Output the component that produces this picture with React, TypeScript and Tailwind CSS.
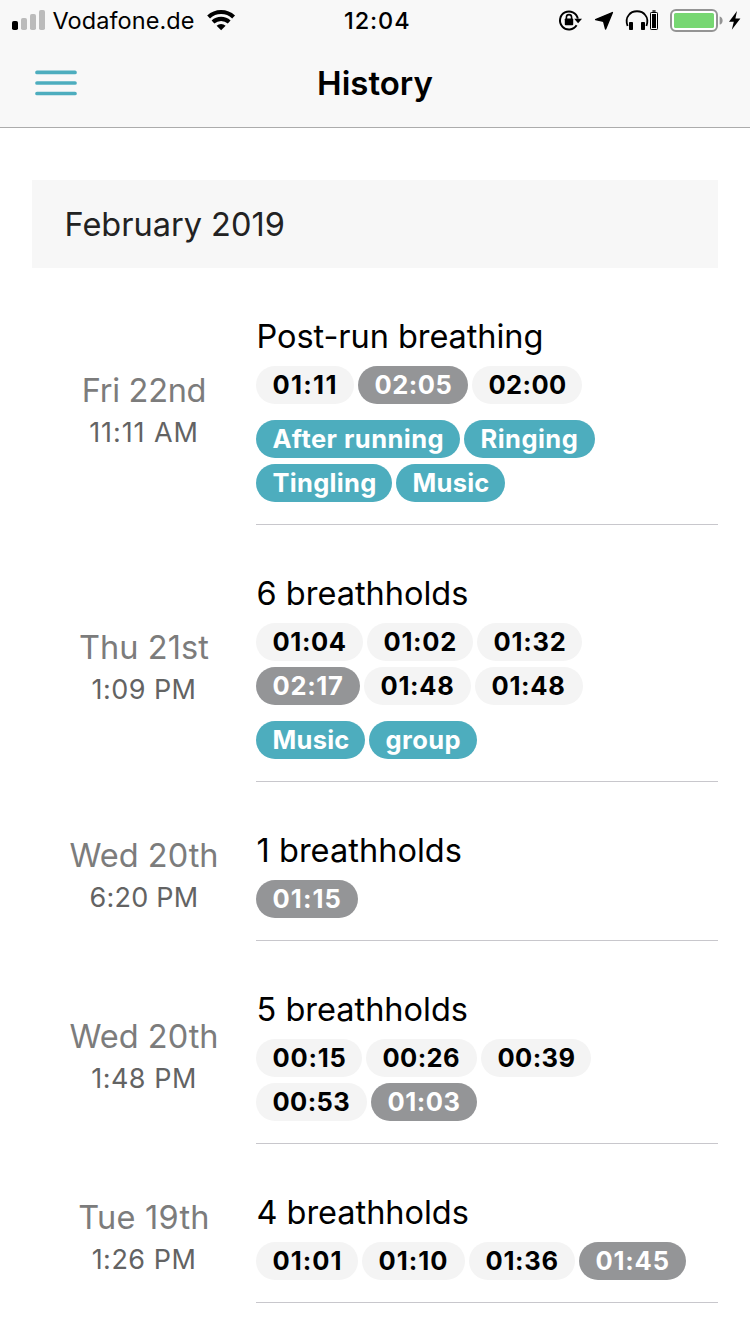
import React from "react";

type Tone = "light" | "dark" | "teal";
type PillData = { text: string; size: string; tone?: Tone };
type Entry = {
  day: string;
  dayTracking: string;
  time: string;
  timeTracking: string;
  title: string;
  titleTracking: string;
  holds: PillData[];
  tags?: PillData[];
};

const tones: Record<Tone, string> = {
  light: "bg-[#f4f4f4] text-black",
  dark: "bg-[#949597] text-white",
  teal: "bg-[#4dadbe] text-white",
};

const entries: Entry[] = [
  {
    day: "Fri 22nd",
    dayTracking: "tracking-[-0.3px]",
    time: "11:11 AM",
    timeTracking: "tracking-[0.9px]",
    title: "Post-run breathing",
    titleTracking: "tracking-[-0.06px]",
    holds: [
      { text: "01:11", size: "w-[98px] tracking-[1.3px]" },
      { text: "02:05", size: "w-[110px] tracking-[0.5px]", tone: "dark" },
      { text: "02:00", size: "w-[110px] tracking-[0.4px]" },
    ],
    tags: [
      { text: "After running", size: "w-[204px] tracking-[0.47px]" },
      { text: "Ringing", size: "w-[131px] tracking-[0.45px]" },
      { text: "Tingling", size: "w-[136px] tracking-[0.3px]" },
      { text: "Music", size: "w-[109px] tracking-[0.25px]" },
    ],
  },
  {
    day: "Thu 21st",
    dayTracking: "tracking-[0.1px]",
    time: "1:09 PM",
    timeTracking: "tracking-[0.45px]",
    title: "6 breathholds",
    titleTracking: "tracking-[0px]",
    holds: [
      { text: "01:04", size: "w-[107px] tracking-[0.6px]" },
      { text: "01:02", size: "w-[106px] tracking-[0.7px]" },
      { text: "01:32", size: "w-[105px] tracking-[0.8px]" },
      { text: "02:17", size: "w-[104px] tracking-[0.7px]", tone: "dark" },
      { text: "01:48", size: "w-[107px] tracking-[0.7px]" },
      { text: "01:48", size: "w-[108px] tracking-[0.7px]" },
    ],
    tags: [
      { text: "Music", size: "w-[109px] tracking-[0.25px]" },
      { text: "group", size: "w-[108px] tracking-[0.4px]" },
    ],
  },
  {
    day: "Wed 20th",
    dayTracking: "tracking-[0px]",
    time: "6:20 PM",
    timeTracking: "tracking-[0.25px]",
    title: "1 breathholds",
    titleTracking: "tracking-[0.04px]",
    holds: [{ text: "01:15", size: "w-[102px] tracking-[1.1px]", tone: "dark" }],
  },
  {
    day: "Wed 20th",
    dayTracking: "tracking-[0px]",
    time: "1:48 PM",
    timeTracking: "tracking-[0.5px]",
    title: "5 breathholds",
    titleTracking: "tracking-[0px]",
    holds: [
      { text: "00:15", size: "w-[106px] tracking-[0.8px]" },
      { text: "00:26", size: "w-[111px] tracking-[0.4px]" },
      { text: "00:39", size: "w-[110px] tracking-[0.4px]" },
      { text: "00:53", size: "w-[111px] tracking-[0.4px]" },
      { text: "01:03", size: "w-[106px] tracking-[0.5px]", tone: "dark" },
    ],
  },
  {
    day: "Tue 19th",
    dayTracking: "tracking-[0.25px]",
    time: "1:26 PM",
    timeTracking: "tracking-[0.5px]",
    title: "4 breathholds",
    titleTracking: "tracking-[-0.03px]",
    holds: [
      { text: "01:01", size: "w-[102px] tracking-[1px]" },
      { text: "01:10", size: "w-[103px] tracking-[1px]" },
      { text: "01:36", size: "w-[106px] tracking-[0.7px]" },
      { text: "01:45", size: "w-[107px] tracking-[0.8px]", tone: "dark" },
    ],
  },
];

function Pill({ text, size, tone }: { text: string; size: string; tone: Tone }) {
  return (
    <span
      className={`flex h-[38px] shrink-0 items-center rounded-full pl-[16.5px] text-[25.5px] leading-[38px] font-bold whitespace-nowrap ${size} ${tones[tone]}`}
    >
      {text}
    </span>
  );
}

function EntryRow({ entry }: { entry: Entry }) {
  return (
    <li className="flex px-8">
      <div className="flex w-56 shrink-0 flex-col items-center justify-center pt-[31px] whitespace-nowrap">
        <span className={`text-[32.5px] leading-[42px] font-normal text-[#7c7c7c] ${entry.dayTracking}`}>{entry.day}</span>
        <span className={`text-[27px] leading-[42px] font-normal text-[#636363] ${entry.timeTracking}`}>{entry.time}</span>
      </div>
      <div className="flex-1 border-b border-[#c8c7cc] pt-[49px] pb-[22px]">
        <h2 className={`h-[49px] pl-[0.5px] text-[32.5px] leading-10 font-normal whitespace-nowrap text-black ${entry.titleTracking}`}>
          {entry.title}
        </h2>
        <div className="flex w-[432px] flex-wrap gap-x-1 gap-y-1.5">
          {entry.holds.map((p, i) => (
            <Pill key={i} text={p.text} size={p.size} tone={p.tone ?? "light"} />
          ))}
        </div>
        {entry.tags && (
          <div className="mt-4 flex w-[360px] flex-wrap gap-x-1 gap-y-1.5">
            {entry.tags.map((p, i) => (
              <Pill key={i} text={p.text} size={p.size} tone="teal" />
            ))}
          </div>
        )}
      </div>
    </li>
  );
}

function StatusBar() {
  return (
    <div className="flex h-10 items-center">
      <svg className="block" width="48" height="40" viewBox="0 0 48 40">
        <rect x="12" y="21" width="6" height="9" rx="1.8" fill="#000" />
        <g fill="#bbb">
          <rect x="21" y="18" width="6" height="12" rx="1.8" />
          <rect x="30" y="14" width="6" height="16" rx="1.8" />
          <rect x="39" y="10" width="6" height="20" rx="1.8" />
        </g>
      </svg>
      <span className="w-[157px] pt-[2px] pl-[4.5px] text-[23.5px] tracking-[0.07px] whitespace-nowrap">Vodafone.de</span>
      <svg className="block" width="32" height="40" viewBox="205 0 32 40">
        <g fill="none" stroke="#000" strokeWidth="4.1">
          <path d="M208.6 17A18.2 18.2 0 0 1 233.6 17" />
          <path d="M213 22A12 12 0 0 1 229.2 22" />
        </g>
        <path d="M216.6 25.8A6.8 6.8 0 0 1 225.6 25.8L221.1 30.2Z" fill="#000" />
      </svg>
      <span className="ml-[107px] w-[70px] pt-[2px] text-[23.5px] font-medium tracking-[0.9px] whitespace-nowrap">12:04</span>
      <svg className="ml-auto block" width="200" height="40" viewBox="550 0 200 40">
        <path d="M576.6 25.3A9 9 0 1 1 577.8 18.6" fill="none" stroke="#000" strokeWidth="2" />
        <path d="M574.2 18.8H582L578.1 23.2Z" />
        <rect x="564.8" y="18.4" width="8.4" height="6.8" rx="0.8" />
        <path d="M566.4 19V17.2A2.6 2.6 0 0 1 571.6 17.2V19" fill="none" stroke="#000" strokeWidth="1.6" />
        <path d="M612.4 12.6L605.6 29L603.6 21.4L595.6 19.6Z" stroke="#000" strokeWidth="1.4" strokeLinejoin="round" />
        <path d="M627.6 26C626 21.5 626.4 17.8 628.8 15C632.4 10 641.6 10 645.2 15C647.6 17.8 648 21.5 646.4 26" fill="none" stroke="#000" strokeWidth="1.8" />
        <rect x="629" y="22" width="4" height="8" rx="0.8" />
        <rect x="641" y="22" width="4" height="8" rx="0.8" />
        <rect x="650.5" y="12.5" width="7" height="17" rx="0.8" fill="none" stroke="#000" />
        <rect x="652" y="14" width="4" height="14" />
        <rect x="652.4" y="10.3" width="3.2" height="1.4" />
        <rect x="671" y="10" width="46" height="21" rx="5" fill="#fff" stroke="#949494" strokeWidth="2" />
        <rect x="674" y="13" width="40" height="15" rx="1.6" fill="#77d772" />
        <path d="M719.6 16.4C723.6 17.2 723.6 23.8 719.6 24.6Z" fill="#949494" />
        <path d="M737 11L729 21.8H733.8L731.8 29.8L740.4 18.4H735.4Z" />
      </svg>
    </div>
  );
}

export default function App() {
  return (
    <div className="h-[1334px] w-[750px] overflow-hidden bg-white font-['Inter','Liberation_Sans',sans-serif] text-black">
      <header className="h-32 border-b border-[#acacac] bg-[#f8f8f8]">
        <StatusBar />
        <div className="grid h-[86px] grid-cols-[1fr_auto_1fr] items-center">
          <button aria-label="Menu" className="ml-[35px] w-[42px]">
            <svg className="block" width="42" height="26" viewBox="0 0 42 26">
              <path d="M2 2.4H40M2 13H40M2 23.5H40" stroke="#4dadbe" strokeWidth="3.7" strokeLinecap="round" />
            </svg>
          </button>
          <h1 className="text-[33px] leading-10 font-semibold whitespace-nowrap">History</h1>
        </div>
      </header>
      <main className="pt-[52px]">
        <div className="mx-8 flex h-[88px] items-center bg-[#f7f7f7] pt-[2px] pl-[32.5px] text-[32.5px] text-[#222]">February 2019</div>
        <ul>
          {entries.map((entry, i) => (
            <EntryRow key={i} entry={entry} />
          ))}
        </ul>
      </main>
    </div>
  );
}
